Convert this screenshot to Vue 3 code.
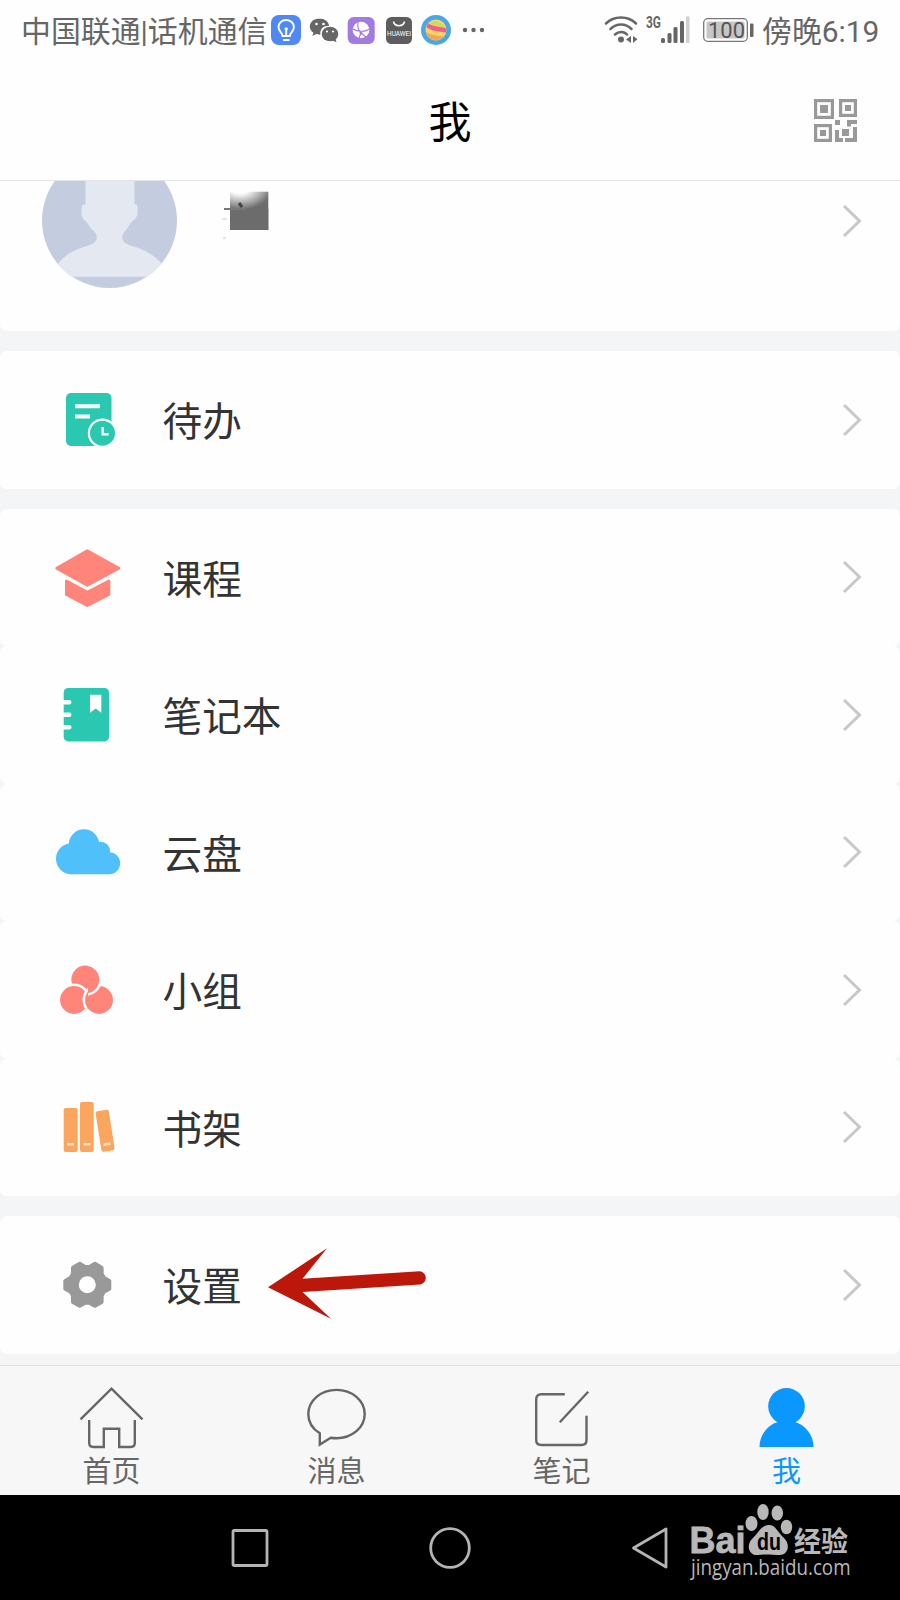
<template>
    <div class="phone">
        <div class="statusBar">
            <div class="carrier">中国联通|话机通信</div>
            <svg class="notices" width="220" height="36" viewBox="268 12 220 36">
                <rect x="271" y="15" width="30" height="30" rx="8" fill="#5089f5" />
                <path d="M282.500 36c0-3.500-4-4.500-4-9a7.700 7 0 0 1 15.400 0c0 4.500-4 5.500-4 9zM283 40h6.500M286.200 35v-5" fill="none" stroke="#fff" stroke-width="1.900" />
                <circle cx="286.200" cy="29" r="1.700" fill="#fff" />
                <path d="M319.500 18.500c-5.500 0-9.700 3.600-9.700 8 0 2.600 1.400 4.700 3.600 6.200l-1 3.300 3.800-1.900 4.200.6c-.8-5.700 3-9 8.800-9-.8-4.200-4.700-7.200-9.700-7.200z" fill="#666" />
                <ellipse cx="330" cy="34" rx="8.300" ry="7.300" fill="#666" />
                <path d="M331 40l5.500 2.300-1.300-4z" fill="#666" />
                <g fill="#fff">
                    <circle cx="316.500" cy="24" r="1.300" />
                    <circle cx="323.500" cy="24" r="1.300" />
                    <circle cx="327" cy="31.500" r="1.100" />
                    <circle cx="333" cy="31.500" r="1.100" />
                </g>
                <rect x="347.700" y="17" width="27" height="27" rx="6" fill="#a27be0" />
                <circle cx="361" cy="30" r="8.300" fill="#fff" />
                <path d="M358 22c-1 6 1 9 3 11M353 29c4 3 13 3 16 0M361 33l5 4M361 33l-2 5" fill="none" stroke="#a27be0" stroke-width="1.100" />
                <circle cx="361" cy="33" r="1.500" fill="#a27be0" />
                <rect x="386" y="17" width="26" height="27" rx="5.500" fill="#5d5d5d" />
                <path d="M393.500 21.500c1 5.500 10 5.500 11 0" fill="none" stroke="#fff" stroke-width="1.500" />
                <text x="387" y="35.500" font-size="6.500" textLength="24" lengthAdjust="spacingAndGlyphs" fill="#fff">HUAWEI</text>
                <circle cx="436" cy="30" r="15" fill="#4aa6e6" />
                <circle cx="436" cy="30" r="10.500" fill="#f3d765" />
                <path d="M428.500 23c5-3 13-2 17 5z" fill="#c5dc62" />
                <path d="M428 23.300c4 3 12 3 18.300 5.200l-.2 4c-7-1-15-1-19.600-5.500z" fill="#ef5f86" />
                <path d="M426 32c5 3 12 4 18 4.500-4 5-15 6-18-4.500z" fill="#f5a45d" />
                <g fill="#666">
                    <circle cx="465" cy="30" r="2.200" />
                    <circle cx="473.500" cy="30" r="2.200" />
                    <circle cx="482" cy="30" r="2.200" />
                </g>
            </svg>
            <svg class="signals" width="154" height="36" viewBox="602 12 154 36">
                <g fill="none" stroke="#666" stroke-width="2.500" stroke-linecap="round">
                    <path d="M606 23.500c8-8 22-8 30 0" />
                    <path d="M610.500 29c6-6 15-6 21 0" />
                    <path d="M615 34.500c3.500-3.500 9-3.500 12 0" />
                </g>
                <circle cx="621" cy="39.500" r="3" fill="#666" />
                <path d="M626 39.500l5-3.500v7zM633 36l4.500 3-4.500 4z" fill="#666" />
                <text x="646" y="28" class="net" textLength="15" lengthAdjust="spacingAndGlyphs">3G</text>
                <g fill="#666">
                    <rect x="661" y="38" width="4" height="5" rx="1.500" />
                    <rect x="667.500" y="33" width="4" height="10" rx="1.500" />
                    <rect x="673.500" y="27" width="4" height="16" rx="1.500" />
                    <rect x="680" y="21" width="4" height="22" rx="1.500" />
                </g>
                <rect x="686" y="16.500" width="3.500" height="26.500" fill="#d0d0d0" />
                <rect x="703.700" y="18.700" width="43.600" height="22.600" rx="4" fill="#fff" stroke="#777" stroke-width="1.300" />
                <rect x="706.500" y="21.500" width="38" height="17" rx="1.500" fill="#c6c6c6" />
                <rect x="750" y="23.500" width="3.500" height="13.500" rx="1" fill="#666" />
                <text x="708" y="38" class="battery" textLength="37" lengthAdjust="spacingAndGlyphs">100</text>
            </svg>
            <div class="clock">傍晚6:19</div>
        </div>

        <div class="header">
            <div class="title">我</div>
            <svg class="qr" width="43" height="43" viewBox="0 0 43 43">
                <g fill="none" stroke="#999" stroke-width="3.200">
                    <rect x="1.600" y="1.600" width="16.800" height="16.800" />
                    <rect x="26.600" y="1.600" width="14.800" height="14.800" />
                    <rect x="1.600" y="26.600" width="14.800" height="14.800" />
                </g>
                <path d="M6 6h8v8H6zM31 6h6v6h-6zM6 31h6v6H6zM21 21h5v5h-5zM33 21h10v4h-6v2.500h-4zM28 30h7v7h-7zM21 31h4v8h4v4h-8zM39 28h4v15H31v-4h8z" fill="#999" />
            </svg>
        </div>

        <div class="profile">
            <svg class="avatar" width="135" height="108" viewBox="0 0 135 108">
                <defs>
                    <clipPath id="face"><circle cx="67.500" cy="39.500" r="67.500" /></clipPath>
                </defs>
                <g clip-path="url(#face)">
                    <rect width="135" height="108" fill="#c4cce0" />
                    <path d="M43.500 0V23.500Q39.500 22.500 39.500 28V34Q40.500 38 44.500 41Q48 47 53 51.500Q57 57 52.500 61.500Q49 64 40 66.500Q24 72 15.800 82.700L10 95.700H126L119.800 82.700Q111 72 95 66.500Q86 64 82.500 61.500Q78 57 82 51.500Q86 47 89 41.500Q95 37 95.500 33V28Q96 22.500 92.500 23.500V0Z" fill="#e4e8f1" />
                </g>
            </svg>
            <svg class="name" width="50" height="52" viewBox="220 188 50 52">
                <defs>
                    <radialGradient id="smudge" gradientUnits="userSpaceOnUse" cx="240" cy="186" r="25" gradientTransform="matrix(1.400 0 0 1 -96 0)">
                        <stop offset="0.300" stop-color="#fff" />
                        <stop offset="0.950" stop-color="#6c6c6c" />
                    </radialGradient>
                </defs>
                <rect x="230" y="191.700" width="38.300" height="38.300" fill="url(#smudge)" />
                <path d="M230 209h38.300v21H230z" fill="#6c6c6c" />
                <path d="M224 209h22" stroke="#777" stroke-width="2" />
                <path d="M239 203l3 4" stroke="#444" stroke-width="3" />
                <path d="M222 219h5M223 238.500l3-1" stroke="#e4e4e4" stroke-width="2" />
            </svg>
            <svg class="chevron" width="22" height="36" viewBox="0 0 22 36">
                <path d="M3 3l15.500 15L3 33" />
            </svg>
        </div>

        <div v-for="(group, i) in groups" :key="i" class="group">
            <div v-for="item in group" :key="item.icon" class="row">
                <svg class="icon" width="80" height="80" viewBox="0 0 80 80">
                    <g v-if="item.icon === 'todo'">
                        <rect x="20" y="13" width="45.500" height="53" rx="5" fill="#2ac8b0" />
                        <path d="M29 26.300h25M29 36.500h15" stroke="#fff" stroke-width="4" />
                        <circle cx="56.500" cy="53.200" r="13.600" fill="#2ac8b0" stroke="#fff" stroke-width="2.200" />
                        <path d="M56.700 47v7.200h6" fill="none" stroke="#fff" stroke-width="2.400" />
                    </g>
                    <g v-else-if="item.icon === 'course'" fill="#ff857a" stroke="#ff857a" stroke-width="3" stroke-linejoin="round">
                        <path d="M10.800 31.200L41.300 13.800 72.800 31.200 41.300 48.300z" />
                        <path d="M20.500 44L41.300 55.300 62.800 44V57.500L41.300 68.500 20.500 57.500z" />
                    </g>
                    <g v-else-if="item.icon === 'notebook'">
                        <rect x="17.700" y="13" width="45.300" height="53.400" rx="4.500" fill="#2ac8b0" />
                        <path d="M17 27.200h6.300M17 39.800h6.300M17 52.200h6.300" stroke="#fff" stroke-width="4.400" stroke-linecap="round" />
                        <path d="M44 19.700h11.300v18l-5.600-4.300-5.700 4.300z" fill="#fff" />
                    </g>
                    <g v-else-if="item.icon === 'cloud'" fill="#50c0fb">
                        <circle cx="25.500" cy="46.700" r="15.500" />
                        <circle cx="38" cy="32.400" r="15.200" />
                        <circle cx="54.500" cy="39.400" r="9.600" />
                        <circle cx="63.200" cy="51.200" r="11" />
                        <path d="M25 32h30l8 18v12.200H25z" />
                    </g>
                    <g v-else-if="item.icon === 'team'" fill="#ff857a">
                        <clipPath id="half"><path d="M42 0h38v80H42z" /></clipPath>
                        <circle cx="39.300" cy="29.600" r="14" />
                        <g stroke="#fff" stroke-width="2.500">
                            <circle cx="28" cy="50" r="15.200" />
                            <circle cx="53" cy="50" r="15.200" />
                            <circle cx="39.300" cy="29.600" r="15.200" clip-path="url(#half)" />
                        </g>
                    </g>
                    <g v-else-if="item.icon === 'shelf'" fill="#fca55f">
                        <rect x="17.700" y="21" width="14" height="44" rx="2" />
                        <rect x="34" y="15" width="13.700" height="50" rx="2" />
                        <rect x="52.400" y="23.300" width="13.400" height="41" rx="2" transform="rotate(-9 59 43.800)" />
                        <path d="M21 57.300h7M37.500 57.300h7M57.500 57.800l7-1.200" stroke="#ffe3cb" stroke-width="2.600" />
                    </g>
                    <g v-else>
                        <path :d="gear" fill="#999" stroke="#999" stroke-width="4" stroke-linejoin="round" />
                        <circle cx="41.300" cy="39.800" r="8.500" fill="#fff" />
                    </g>
                </svg>
                <span class="label">{{ item.label }}</span>
                <svg class="chevron" width="22" height="36" viewBox="0 0 22 36">
                    <path d="M3 3l15.500 15L3 33" />
                </svg>
                <svg v-if="item.icon === 'settings'" class="pointer" width="170" height="80" viewBox="260 1244 170 80">
                    <path d="M268 1287.300L327 1248.300 302.500 1278.700 419.500 1271.300A6.600 6.600 0 0 1 420.300 1284.400L302.500 1292 331 1318.700Z" fill="#bb170b" />
                </svg>
            </div>
        </div>

        <div class="tabBar">
            <div v-for="tab in tabs" :key="tab.icon" class="tab" :class="{ active: tab.icon === 'me' }">
                <svg class="tabIcon" width="70" height="70" viewBox="0 0 70 70">
                    <g v-if="tab.icon === 'home'">
                        <path d="M3.500 39.300l31-30.600 31 30.600" />
                        <path d="M12.200 40v23q0 4 4 4h10.600V48.700h15.400V67h11.600q4 0 4-4V40" />
                    </g>
                    <path v-else-if="tab.icon === 'message'" d="M17.800 53.300C10 48.500 6.300 42 6.300 34 6.300 20.500 19 9.900 34.500 9.900S62.700 20.500 62.700 34 50 58.300 34.500 58.300Q31.500 58.300 28.800 57.800L17.800 64.500Z" />
                    <g v-else-if="tab.icon === 'note'">
                        <path d="M37.800 14.300H14.200q-5 0-5 5V60q0 5 5 5H54.500q5 0 5-5V35.700" />
                        <path d="M32.800 42.300l28.400-30.600" />
                    </g>
                    <g v-else class="person">
                        <circle cx="34.500" cy="26.300" r="18.300" />
                        <path d="M7.500 67c0-12 8-22.500 20-25.500h14c12 3 20 13.500 20 25.500z" />
                    </g>
                </svg>
                <span>{{ tab.label }}</span>
            </div>
        </div>

        <div class="navBar">
            <svg class="navKey" width="44" height="44" viewBox="0 0 44 44"><rect x="5" y="4.500" width="34" height="35" rx="1.500" /></svg>
            <svg class="navKey" width="44" height="44" viewBox="0 0 44 44"><circle cx="22" cy="22" r="19.300" /></svg>
            <svg class="navKey" width="44" height="44" viewBox="0 0 44 44"><path d="M5.500 22L38 3v38z" /></svg>
            <svg class="watermark" width="170" height="94" viewBox="686 1500 170 94">
                <g fill="#b8b8b8">
                    <text x="689.500" y="1553.300" class="brand" textLength="56" lengthAdjust="spacingAndGlyphs">Bai</text>
                    <ellipse cx="751.500" cy="1523.500" rx="6" ry="7.500" />
                    <ellipse cx="763" cy="1512" rx="5.700" ry="8" />
                    <ellipse cx="777.300" cy="1513" rx="5.800" ry="7.500" />
                    <ellipse cx="786.500" cy="1527" rx="5.700" ry="7.300" />
                    <path d="M769 1525c7 0 9 8 15 13 6.500 6 4.500 17-4 17-6 0-15-1-22 0-9.500 1-12-10-6-16 6-5 9-14 17-14z" />
                    <text x="794" y="1551.500" class="exp" textLength="54" lengthAdjust="spacingAndGlyphs">经验</text>
                    <text x="691" y="1574.800" class="site" textLength="159.500" lengthAdjust="spacingAndGlyphs">jingyan.baidu.com</text>
                </g>
                <text x="757" y="1549.500" class="du" textLength="24" lengthAdjust="spacingAndGlyphs">du</text>
            </svg>
        </div>
    </div>
</template>

<script setup>
const groups = [
    [{ icon: 'todo', label: '待办' }],
    [
        { icon: 'course', label: '课程' },
        { icon: 'notebook', label: '笔记本' },
        { icon: 'cloud', label: '云盘' },
        { icon: 'team', label: '小组' },
        { icon: 'shelf', label: '书架' },
    ],
    [{ icon: 'settings', label: '设置' }],
]

const tabs = [
    { icon: 'home', label: '首页' },
    { icon: 'message', label: '消息' },
    { icon: 'note', label: '笔记' },
    { icon: 'me', label: '我' },
]

// six teeth, valleys between them
function gearPath(cx, cy) {
    const points = []
    for (let k = 0; k < 6; k++) {
        for (const [angle, r] of [[-10, 22.3], [10, 22.3], [23, 18], [37, 18]]) {
            const a = (60 * k + angle) * Math.PI / 180
            points.push(`${(cx + r * Math.cos(a)).toFixed(1)} ${(cy + r * Math.sin(a)).toFixed(1)}`)
        }
    }
    return `M${points.join('L')}Z`
}

const gear = gearPath(41.3, 39.8)
</script>

<style>
body {
    margin: 0;
    background: #f3f5f7;
}
</style>

<style scoped>
.phone {
    display: flex;
    flex-direction: column;
    width: 900px;
    height: 1600px;
    overflow: hidden;
    background: #f3f5f7;
    font-family: Roboto, "Noto Sans CJK SC", sans-serif;
}

.statusBar {
    display: flex;
    align-items: center;
    height: 60px;
    box-sizing: border-box;
    padding: 0 20px 0 21px;
    background: #fefefe;
    color: #666;
    font-size: 29.9px;
    line-height: 60px;
    white-space: nowrap;
}

.carrier {
    width: 247px;
    padding-top: 3px;
}

.signals {
    margin-left: auto;
    margin-right: 6px;
}

.clock {
    width: 118px;
    padding-top: 3px;
}

.net {
    font: 700 16px Roboto, sans-serif;
    fill: #666;
}

.battery {
    font: 400 22px Roboto, sans-serif;
    fill: #555;
}

.header {
    display: grid;
    grid-template-columns: 1fr auto 1fr;
    align-items: center;
    height: 121px;
    box-sizing: border-box;
    padding: 0 43px;
    border-bottom: 1px solid #e4e4e4;
    background: #fefefe;
}

.title {
    grid-column: 2;
    padding-top: 6px;
    color: #000;
    font-size: 43px;
    line-height: 60px;
}

.qr {
    justify-self: end;
}

.profile {
    display: flex;
    align-items: flex-start;
    height: 150px;
    box-sizing: border-box;
    padding: 0 37px 0 42px;
    border-radius: 0 0 7px 7px;
    background: #fefefe;
}

.name {
    margin: 7px 0 0 43px;
}

.chevron {
    margin-left: auto;
    fill: none;
    stroke: #c8c8c8;
    stroke-width: 3;
}

.profile .chevron {
    margin-top: 22px;
}

.group {
    margin-top: 20px;
}

.row {
    position: relative;
    display: flex;
    align-items: center;
    height: 137.5px;
    box-sizing: border-box;
    padding: 0 37px 0 46px;
    border-radius: 7px;
    background: #fefefe;
}

.label {
    margin: 7px 0 0 36.5px;
    color: #333;
    font-size: 39.7px;
    line-height: 60px;
}

.pointer {
    position: absolute;
    left: 260px;
    top: 28px;
}

.tabBar {
    display: grid;
    grid-template-columns: repeat(4, 1fr);
    height: 130px;
    box-sizing: border-box;
    margin-top: auto;
    border-top: 1px solid #e0e4e7;
    background: #f7f7f7;
}

.tab {
    display: flex;
    flex-direction: column;
    align-items: center;
    padding: 14px 2px 0 0;
    color: #666;
    font-size: 29px;
    line-height: 45px;
}

.tabIcon {
    fill: none;
    stroke: #666;
    stroke-width: 2.4;
}

.tab.active {
    color: #0a98ff;
}

.person {
    fill: #0a98ff;
    stroke: none;
}

.navBar {
    position: relative;
    display: flex;
    align-items: center;
    justify-content: center;
    gap: 156px;
    height: 105px;
    background: #000;
}

.navKey {
    fill: none;
    stroke: #b4b4b4;
    stroke-width: 2.8;
    stroke-linejoin: round;
}

.watermark {
    position: absolute;
    left: 686px;
    top: 5px;
}

.brand {
    font: 700 36px "Liberation Sans", sans-serif;
    stroke: #b8b8b8;
    stroke-width: 0.8;
}

.du {
    font: 700 23px "Liberation Sans", sans-serif;
    fill: #000;
}

.exp {
    font: 700 28px "Noto Sans CJK SC", sans-serif;
}

.site {
    font: 400 21px "Open Sans", sans-serif;
}
</style>
